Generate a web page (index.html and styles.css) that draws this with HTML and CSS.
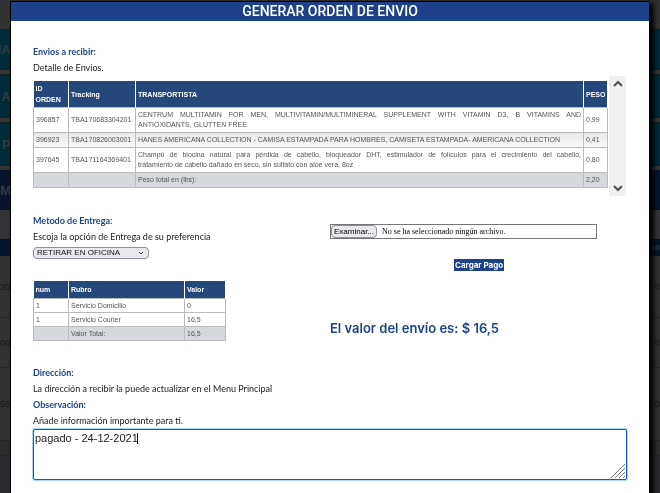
FILE: index.html
```html
<!DOCTYPE html>
<html lang="es">
<head>
<meta charset="utf-8">
<title>Generar orden de envio</title>
<link rel="stylesheet" href="styles.css">
</head>
<body>
<div class="backdrop" aria-hidden="true">
  <div class="strip strip-top"></div>
  <div class="strip tile"><span>IIA</span></div>
  <div class="strip tile"><span>A</span></div>
  <div class="strip tile"><span>P</span></div>
  <div class="strip banner"><span>M</span></div>
  <div class="strip toolbar"></div>
  <div class="strip head"><span></span><span>NI</span></div>
  <div class="strip row row-tall"><span>304</span><span>0</span></div>
  <div class="strip row"><span>003</span><span>0</span></div>
  <div class="strip row row-last"><span>569</span><span>0</span></div>
  <div class="strip row-sum"></div>
  <div class="strip rest"></div>
</div>

<main class="modal" role="dialog" aria-labelledby="title">
  <h1 id="title" class="modal-title">GENERAR ORDEN DE ENVIO</h1>
  <div class="content">
    <section>
      <h2 class="label">Envios a recibir:</h2>
      <p class="text">Detalle de Envios.</p>
      <div class="scroller">
        <table class="grid shipments">
          <colgroup><col class="c-id"><col class="c-track"><col><col class="c-weight"></colgroup>
          <thead>
            <tr><th>ID ORDEN</th><th>Tracking</th><th>TRANSPORTISTA</th><th>PESO</th></tr>
          </thead>
          <tbody>
            <tr><td>396857</td><td>TBA170683304201</td><td class="desc">CENTRUM MULTITAMIN FOR MEN, MULTIVITAMIN/MULTIMINERAL SUPPLEMENT WITH VITAMIN D3, B VITAMINS AND <span class="keep">ANTIOXIDANTS, GLUTTEN FREE</span></td><td>0,99</td></tr>
            <tr class="alt"><td>396923</td><td>TBA170826003001</td><td class="desc">HANES AMERICANA COLLECTION - CAMISA ESTAMPADA PARA HOMBRES, CAMISETA ESTAMPADA- AMERICANA COLLECTION</td><td>0,41</td></tr>
            <tr><td>397645</td><td>TBA171164369401</td><td class="desc">Champú de biocina natural para pérdida de cabello, bloqueador DHT, estimulador de folículos para el crecimiento del cabello, <span class="keep">tratamiento de cabello dañado</span> en seco, sin sulfato con aloe vera, 8oz</td><td>0,80</td></tr>
            <tr class="total"><td></td><td></td><td>Peso total en (lbs):</td><td>2,20</td></tr>
          </tbody>
        </table>
        <div class="scrollbar">
          <svg viewBox="0 0 10 7"><path d="M1 6l4-4 4 4"/></svg>
          <svg viewBox="0 0 10 7"><path d="M1 1l4 4 4-4"/></svg>
        </div>
      </div>
    </section>

    <section class="delivery">
      <div class="method">
        <h2 class="label"><label for="method">Metodo de Entrega:</label></h2>
        <p class="text">Escoja la opción de Entrega de su preferencia</p>
        <div class="select-box">
          <select id="method"><option>RETIRAR EN OFICINA</option></select>
          <svg viewBox="0 0 6 4"><path d="M1 1l2 2 2-2"/></svg>
        </div>
        <table class="grid costs">
          <colgroup><col class="c-id"><col><col class="c-value"></colgroup>
          <thead><tr><th>num</th><th>Rubro</th><th>Valor</th></tr></thead>
          <tbody>
            <tr><td>1</td><td>Servicio Domicilio</td><td>0</td></tr>
            <tr><td>1</td><td>Servicio Courier</td><td>16,5</td></tr>
            <tr class="total"><td></td><td>Valor Total:</td><td>16,5</td></tr>
          </tbody>
        </table>
      </div>
      <div class="payment">
        <label class="file">
          <input type="file">
          <span class="browse">Examinar...</span>
          <span>No se ha seleccionado ningún archivo.</span>
        </label>
        <button type="button" class="upload">Cargar Pago</button>
        <p class="amount">El valor del envío es: $ 16,5</p>
      </div>
    </section>

    <section>
      <h2 class="label">Dirección:</h2>
      <p class="text">La dirección a recibir la puede actualizar en el Menu Principal</p>
      <h2 class="label"><label for="note">Observación:</label></h2>
      <p class="text">Añade información importante para ti.</p>
      <div class="note-box">
        <textarea id="note">pagado - 24-12-2021</textarea>
        <i class="caret"></i>
        <svg class="grip" viewBox="0 0 14 14"><path d="M0 14L14 0M4 14L14 4M8 14l6-6M12 14l2-2"/></svg>
      </div>
    </section>
  </div>
</main>
</body>
</html>
```

FILE: styles.css
```css
* { box-sizing: border-box; }

body {
  margin: 0;
  height: 100vh;
  overflow: hidden;
  background: #333;
  color: #222;
  font-family: "Liberation Sans", sans-serif;
}

h1, h2, p { margin: 0; }

/* Dimmed page behind the dialog */
.backdrop {
  position: fixed;
  inset: 0;
  display: flex;
  flex-direction: column;
  color: #171717;
  font-size: 9px;
}
.strip {
  display: flex;
  flex-shrink: 0;
  align-items: center;
  justify-content: space-between;
}
.strip span:first-child {
  display: flex;
  justify-content: flex-end;
  width: 11px;
}
.strip.row span:first-child { justify-content: flex-start; }
.strip-top { height: 29px; }
.tile {
  height: 41px;
  margin-bottom: 4px;
  border: solid #111c20;
  border-width: 1px 0;
  background: #002b38;
  color: #303c40;
  font-size: 13px;
  font-weight: bold;
}
.tile + .tile { height: 44px; }
.banner {
  height: 40px;
  background: #08142b;
  color: #333a45;
  font-size: 13px;
  font-weight: bold;
}
.toolbar { height: 29px; background: #333438; }
.head {
  height: 17px;
  background: #06142b;
  color: #303a45;
  font-size: 8px;
  font-weight: bold;
}
.row { height: 50px; border-bottom: 1px solid #262626; }
.row-tall { height: 62px; }
.row-last { height: 73px; }
.row-sum { height: 15px; border-bottom: 1px solid #262626; background: #2d2e2e; }
.rest { flex: 1; background: #2b2d31; }

/* Dialog */
.modal {
  position: fixed;
  inset: 1px 11px 0 10px;
  border: solid #000;
  border-width: 1px 0 0 1px;
  background: #fff;
  box-shadow: 4px 3px 5px 1px #000;
}
.modal-title {
  background: #1d4289;
  color: #fff;
  font: 500 14px/19px Roboto, sans-serif;
  text-align: center;
}
.content {
  display: flex;
  flex-direction: column;
  gap: 17px;
  padding: 23px 22px 0;
}
.label {
  color: #1d4289;
  font: bold 9px/16px Lato, sans-serif;
}
.text { font: 9px/16px Lato, sans-serif; }

/* Tables */
.grid {
  width: 100%;
  border-collapse: collapse;
  table-layout: fixed;
  color: #555;
  font-size: 7px;
  line-height: 10px;
}
.grid th {
  padding: 2px;
  border-right: 1px solid #fff;
  background: #24477c;
  color: #fff;
  line-height: 11px;
  text-align: left;
}
.grid td {
  padding: 2px;
  border: 1px solid #bbb;
  white-space: nowrap;
}
.grid .desc {
  text-align: justify;
  white-space: normal;
}
.grid .keep { white-space: nowrap; }
.grid .alt { background: linear-gradient(#e8e8e8, #fafafa); }
.grid .total { background: #d5d8dc; }
.c-id { width: 35px; }
.c-track { width: 67px; }
.c-weight { width: 24px; }
.c-value { width: 41px; }
.shipments { margin-top: 5px; }

.scroller {
  display: flex;
  align-items: flex-start;
  min-height: 120px;
  margin-right: 1px;
}
.scrollbar {
  display: flex;
  flex: 0 0 17px;
  flex-direction: column;
  align-items: center;
  justify-content: space-between;
  align-self: stretch;
  margin-left: 1px;
  padding: 4px 0;
  background: #f0f0f0;
}
.scrollbar svg {
  width: 10px;
  fill: none;
  stroke: #505050;
  stroke-width: 2;
}

/* Delivery and payment */
.delivery {
  display: flex;
  gap: 104px;
  padding-bottom: 7px;
}
.method { flex: 0 0 193px; }
.select-box {
  position: relative;
  width: 116px;
  height: 12px;
  margin-top: 2px;
}
select {
  display: block;
  width: 100%;
  height: 100%;
  padding: 0 3px;
  border: 1px solid #8f8f9d;
  border-radius: 4px;
  background: #e9e9ed;
  color: #111;
  font: 8px/10px "Liberation Sans", sans-serif;
  appearance: none;
}
.select-box svg {
  position: absolute;
  top: 4px;
  right: 5px;
  width: 6px;
  fill: none;
  stroke: #444;
}
.costs {
  margin-top: 22px;
  line-height: 9px;
}
.costs th { line-height: 13px; }

.payment {
  flex: 1;
  padding-top: 11px;
}
.file {
  display: flex;
  align-items: center;
  gap: 5px;
  height: 15px;
  margin-right: 30px;
  border: 1px solid #767676;
  font: 8px/13px "Liberation Serif", serif;
  color: #000;
}
.file input {
  position: absolute;
  width: 1px;
  height: 1px;
  opacity: 0;
}
.browse {
  padding: 0 2px;
  border: 1px solid #8f8f9d;
  border-radius: 4px;
  background: #e9e9ed;
  font: 8px/11px "Liberation Sans", sans-serif;
}
.upload {
  display: block;
  height: 12px;
  margin: 20px 0 0 124px;
  padding: 0 1px;
  border: 0;
  background: #1d4289;
  color: #fff;
  font: bold 8px/12px Inter, sans-serif;
}
.amount {
  margin-top: 48px;
  color: #1d4289;
  font: 600 13px/18px Inter, sans-serif;
}

/* Note */
.note-box { position: relative; }
textarea {
  display: block;
  width: 100%;
  height: 51px;
  padding: 2px 1px;
  border: 1px solid #0060df;
  border-radius: 2px;
  outline: 0;
  box-shadow: 0 0 0 1px #a9d4f5;
  color: #222;
  font: 11px/13px "Liberation Sans", sans-serif;
  resize: none;
}
.caret {
  position: absolute;
  top: 4px;
  left: 104px;
  width: 1px;
  height: 11px;
  background: #000;
}
.grip {
  position: absolute;
  right: 2px;
  bottom: 2px;
  width: 14px;
  stroke: #777;
}
```
